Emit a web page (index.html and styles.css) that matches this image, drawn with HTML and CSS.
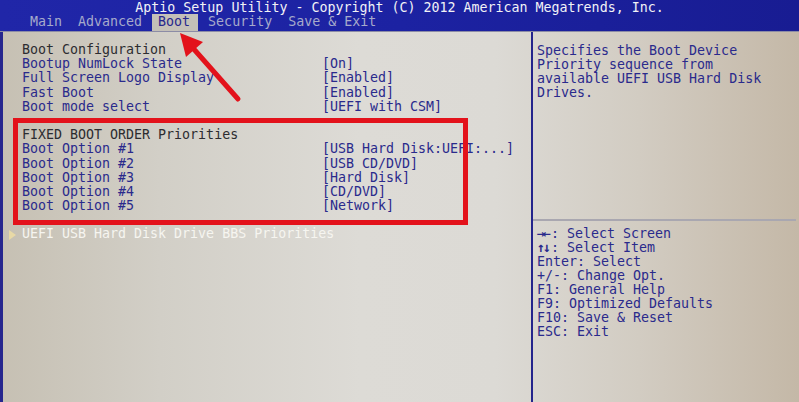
FILE: index.html
```html
<!DOCTYPE html>
<html lang="en">
<head>
    <meta charset="UTF-8">
    <meta name="viewport" content="width=device-width, initial-scale=1.0">
    <title>Aptio Setup Utility - Boot</title>
    <link rel="stylesheet" href="styles.css">
</head>
<body>

    <div class="topbar">
        <div class="title">Aptio Setup Utility - Copyright (C) 2012 American Megatrends, Inc.</div>
        <div class="tabs">
            <span class="tab">Main</span>
            <span class="tab">Advanced</span>
            <span class="tab active">Boot</span>
            <span class="tab">Security</span>
            <span class="tab">Save &amp; Exit</span>
        </div>
    </div>

    <div class="screen">
        <div class="left">
            <div class="row heading"><span>Boot Configuration</span></div>
            <div class="row"><span>Bootup NumLock State</span><span>[On]</span></div>
            <div class="row"><span>Full Screen Logo Display</span><span>[Enabled]</span></div>
            <div class="row"><span>Fast Boot</span><span>[Enabled]</span></div>
            <div class="row"><span>Boot mode select</span><span>[UEFI with CSM]</span></div>
            <div class="row blank"></div>
            <div class="row heading"><span>FIXED BOOT ORDER Priorities</span></div>
            <div class="row"><span>Boot Option #1</span><span>[USB Hard Disk:UEFI:...]</span></div>
            <div class="row"><span>Boot Option #2</span><span>[USB CD/DVD]</span></div>
            <div class="row"><span>Boot Option #3</span><span>[Hard Disk]</span></div>
            <div class="row"><span>Boot Option #4</span><span>[CD/DVD]</span></div>
            <div class="row"><span>Boot Option #5</span><span>[Network]</span></div>
            <div class="row blank"></div>
            <div class="row submenu"><span class="pointer"></span><span>UEFI USB Hard Disk Drive BBS Priorities</span></div>
        </div>

        <div class="right">
            <div class="desc">
                <div>Specifies the Boot Device</div>
                <div>Priority sequence from</div>
                <div>available UEFI USB Hard Disk</div>
                <div>Drives.</div>
            </div>
            <div class="keys">
                <div><b>&rarr;&larr;</b>: Select Screen</div>
                <div><b>&uarr;&darr;</b>: Select Item</div>
                <div>Enter: Select</div>
                <div>+/-: Change Opt.</div>
                <div>F1: General Help</div>
                <div>F9: Optimized Defaults</div>
                <div>F10: Save &amp; Reset</div>
                <div>ESC: Exit</div>
            </div>
        </div>
    </div>

    <!-- red annotation drawn over the photo -->
    <div class="highlight"></div>
    <svg class="arrow" width="799" height="402" viewBox="0 0 799 402">
        <line x1="238" y1="99" x2="192" y2="47" stroke="#e3121b" stroke-width="5" stroke-linecap="round"/>
        <polygon points="180,33 203,42 186,57" fill="#e3121b"/>
    </svg>

</body>
</html>
```

FILE: styles.css
```css
html, body {
    margin: 0;
    padding: 0;
}

body {
    width: 799px;
    height: 402px;
    overflow: hidden;
    position: relative;
    font-family: "DejaVu Sans Mono", "Liberation Mono", monospace;
    font-size: 13.3px;
    background-color: #d3d0c9;
}

.topbar {
    height: 31px;
    background: linear-gradient(90deg, #2026a8 0%, #1c22a2 50%, #181c92 100%);
    color: #f2f2f6;
}

.title {
    text-align: center;
    line-height: 15px;
    height: 14px;
}

.tabs {
    display: flex;
    padding-left: 30px;
    height: 17px;
    line-height: 16px;
}

.tab {
    color: #a6aacb;
    margin-right: 16px;
}

.tab.active {
    background-color: #c4c0b8;
    color: #26268c;
    padding: 0 8px 0 6px;
    margin-left: -6px;
    margin-right: 10px;
}

.screen {
    display: flex;
    height: 371px;
    border-top: 1px solid #8c8ca6;
    box-sizing: border-box;
    background: linear-gradient(90deg, #c6c0b3 0%, #d2cfc7 20%, #dddbd6 45%, #dcdad5 62%, #d2ccc2 80%, #c4b8a7 100%);
}

.left {
    width: 531px;
    box-sizing: border-box;
    border-left: 3px solid #26268e;
    padding: 11px 0 0 19px;
}

.row {
    display: grid;
    grid-template-columns: 300px 1fr;
    height: 14.2px;
    line-height: 14.2px;
    color: #2a2a8c;
    white-space: pre;
}

.row.heading {
    color: #2c2c30;
}

.row.submenu {
    display: flex;
    align-items: center;
    margin-left: -17px;
    color: #f6f5f0;
}

.pointer {
    width: 0;
    height: 0;
    margin: 0 6px 0 4px;
    border-top: 5px solid transparent;
    border-bottom: 5px solid transparent;
    border-left: 7px solid #e8d9a6;
}

.right {
    flex: 1;
    border-left: 2px solid #24248c;
    display: flex;
    flex-direction: column;
    color: #2a2a8c;
    line-height: 14px;
}

.desc {
    height: 187px;
    box-sizing: border-box;
    padding: 12px 4px 0 4px;
}

.keys {
    border-top: 2px solid #a9a7b0;
    margin-right: 3px;
    padding: 6px 4px 0 4px;
}

.keys b {
    font-weight: bold;
    letter-spacing: -2px;
    margin-right: 2px;
}

.highlight {
    position: absolute;
    left: 13px;
    top: 118px;
    width: 455px;
    height: 107px;
    box-sizing: border-box;
    border: 5px solid #e3121b;
}

.arrow {
    position: absolute;
    left: 0;
    top: 0;
}
```
